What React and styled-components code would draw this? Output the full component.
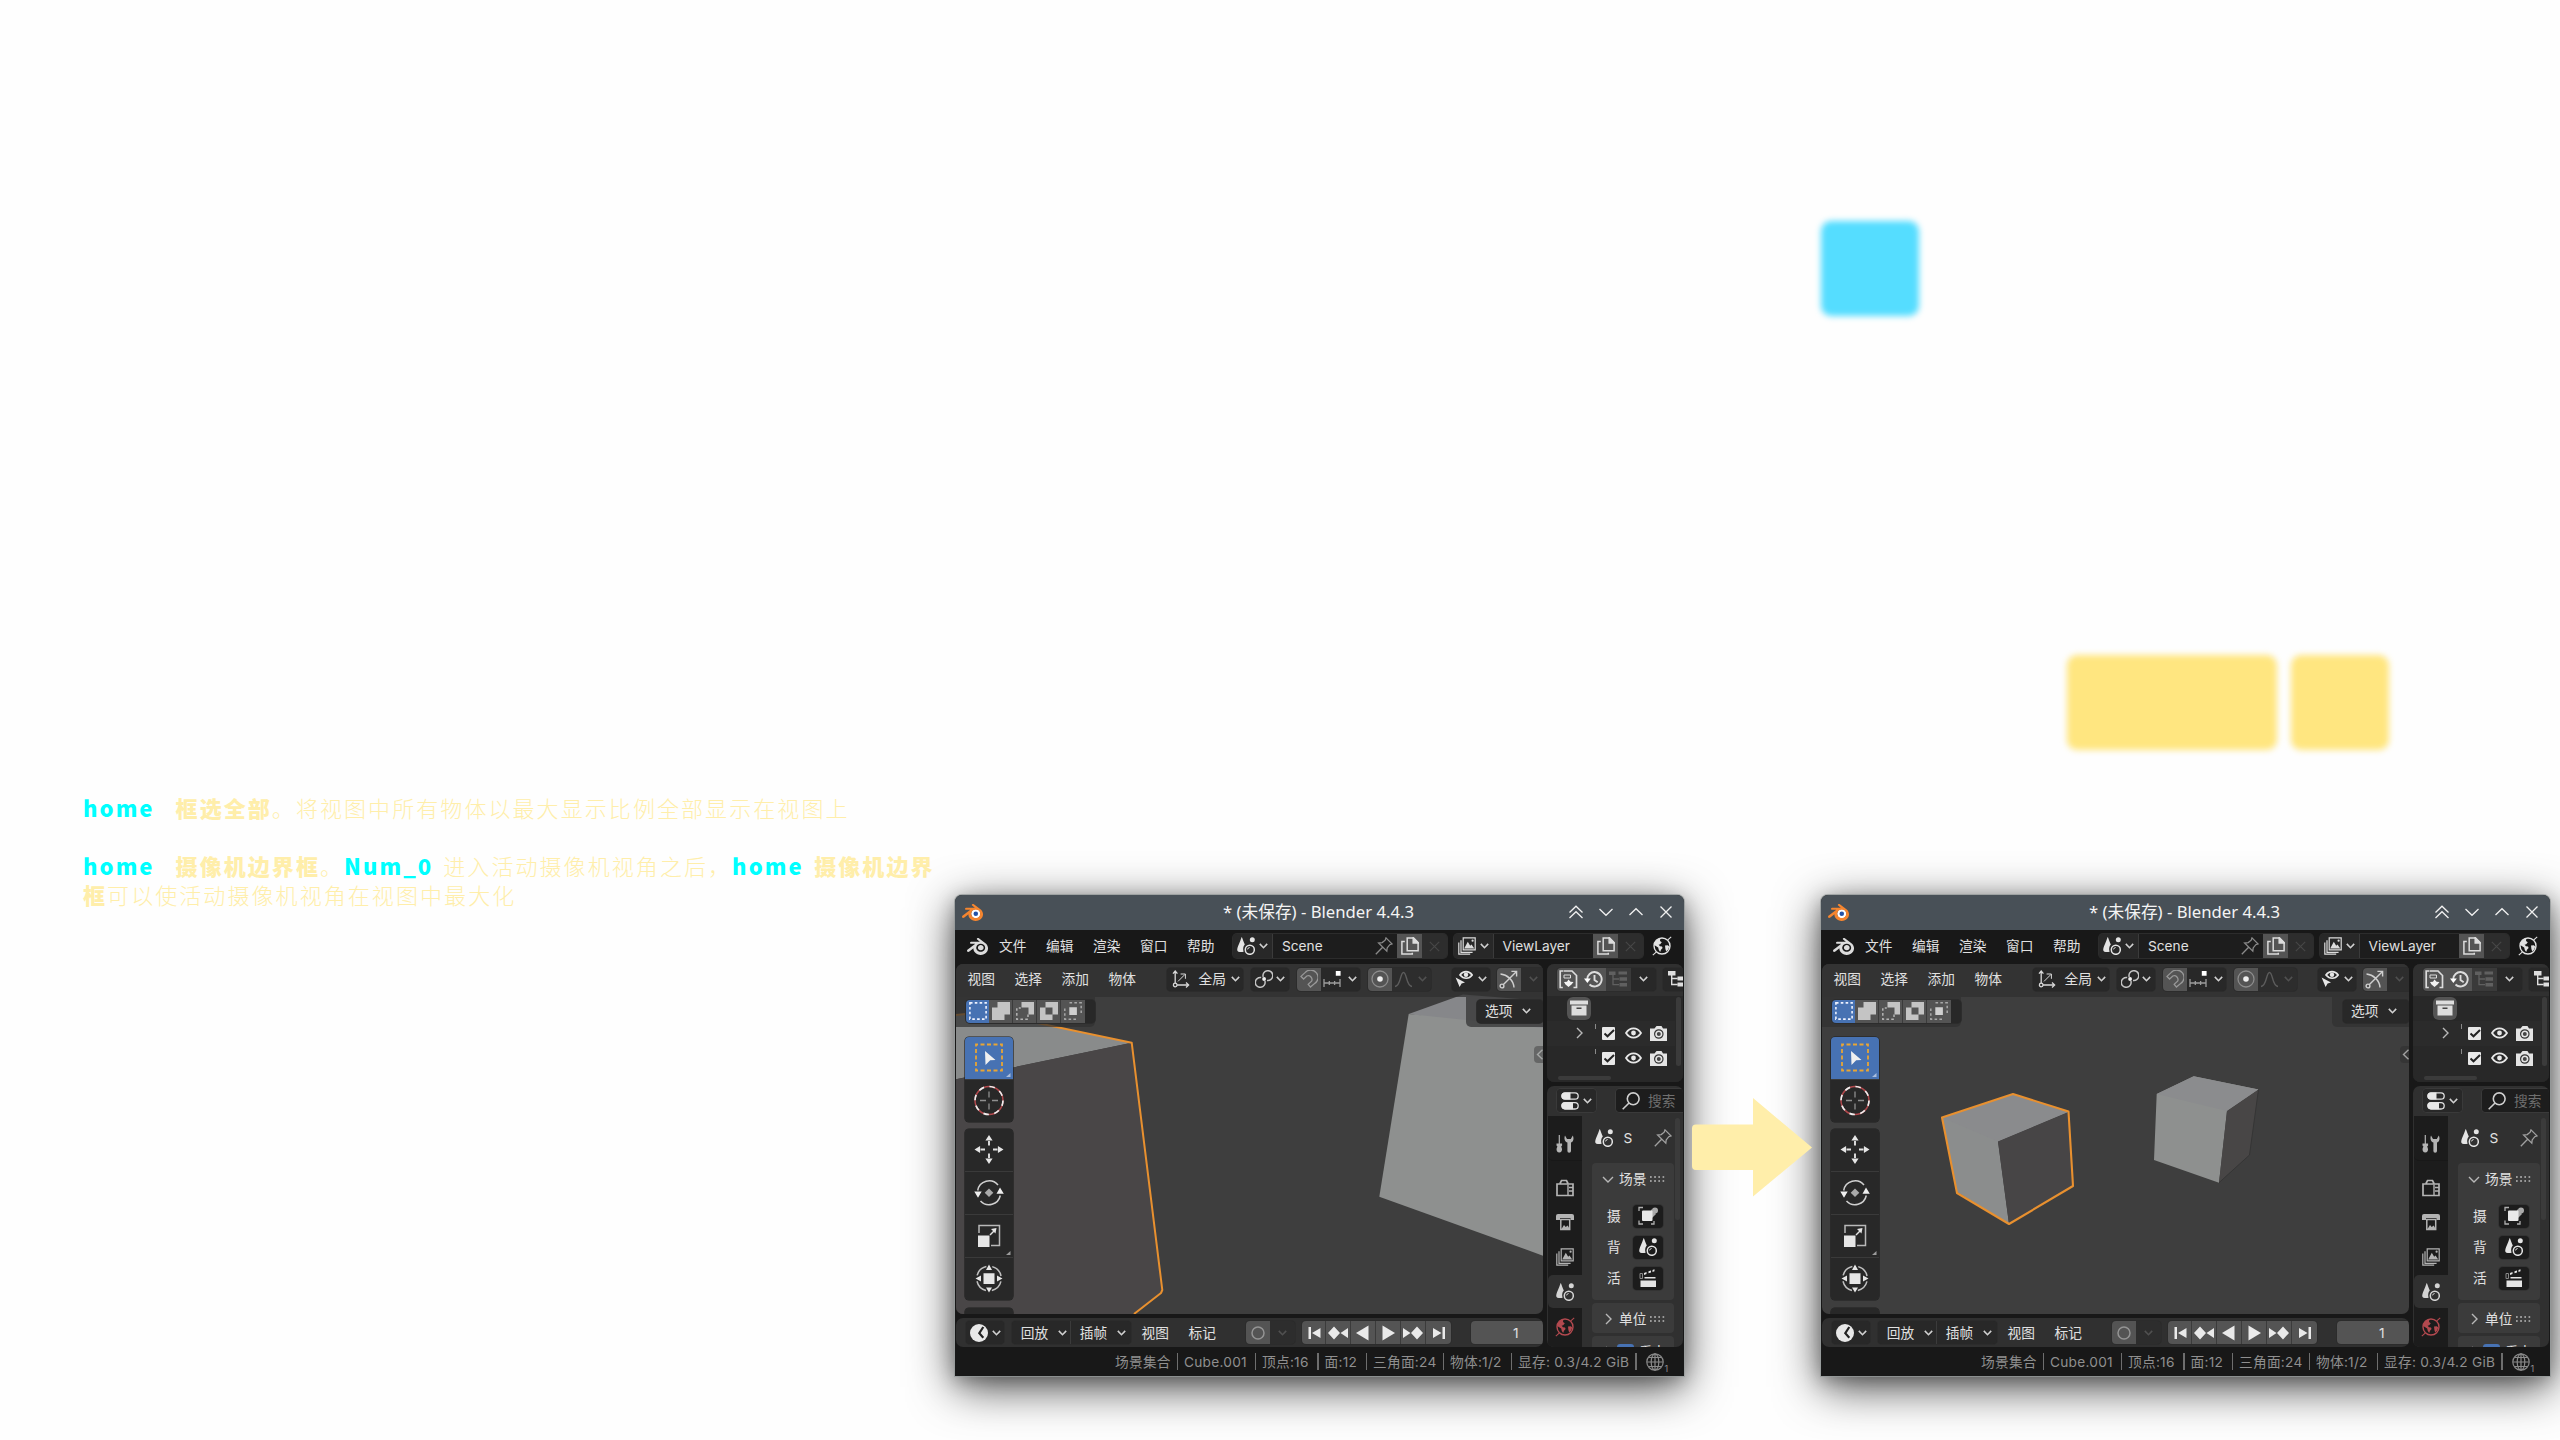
import React from "react";
import styled, { createGlobalStyle } from "styled-components";
import { SiBlender } from "react-icons/si";

const Global = createGlobalStyle`
  html, body { margin: 0; background: #fefefe; }
  * { box-sizing: border-box; }
  svg { display: block; flex: none; }
`;

const Page = styled.main`
  width: 2560px;
  height: 1440px;
  overflow: hidden;
  background: #fefefe;
  display: flex;
  flex-direction: column;
`;
const Keys = styled.section`
  height: 793px;
  padding: 220.5px 171px 0 0;
  display: flex;
  flex-direction: column;
  align-items: flex-end;
  gap: 339px;
  flex: none;
`;
const KeyRow = styled.div`
  display: flex;
  gap: 14px;
  margin-right: ${(p) => p.$mr || 0}px;
`;
const Key = styled.div`
  width: ${(p) => p.$w}px;
  height: 95px;
  border-radius: 10px;
  background: ${(p) => p.$c};
  filter: blur(3px);
`;
const Stage = styled.section`
  display: flex;
  align-items: flex-start;
  padding-left: 83px;
  flex: 1;
`;
const Notes = styled.div`
  width: 872px;
  flex: none;
  font: 300 22px/29px "Noto Sans CJK SC", sans-serif;
  letter-spacing: 2.07px;
  color: #ffeeaa;
  white-space: nowrap;
`;
const Line = styled.p`
  margin: 0 0 ${(p) => p.$gap || 0}px;
  display: flex;
  align-items: baseline;
`;
const Hot = styled.b`
  font-weight: 900;
  color: #00ffff;
  margin-right: ${(p) => p.$mr}px;
`;
const Term = styled.b`
  font-weight: 900;
`;
const ArrowSlot = styled.div`
  width: 137px;
  flex: none;
  padding: 305px 0 0 8px;
  position: relative;
  z-index: 2;
`;

/* window shell */
const Frame = styled.article`
  width: 729px;
  height: 481px;
  margin-top: 102px;
  flex: none;
  display: flex;
  flex-direction: column;
  background: #181818;
  border-radius: 7px 7px 0 0;
  overflow: hidden;
  color: #e0e0e0;
  font: 400 13.7px/20px Inter, "Noto Sans CJK SC", sans-serif;
  white-space: nowrap;
  box-shadow: 0 0 0 1px rgba(150, 155, 155, 0.75), 0 11px 46px rgba(0, 0, 0, 0.72),
    0 4px 18px rgba(0, 0, 0, 0.25);
`;
const TitleBar = styled.header`
  height: 35px;
  flex: none;
  background: #485057;
  display: flex;
  align-items: center;
  padding: 0 11.5px 1px 6.5px;
  color: #f4f4f4;
  font: 400 16.7px/22px "Noto Sans", "Noto Sans CJK SC", sans-serif;
`;
const LogoBox = styled.span`
  width: 110px;
`;
const Caption = styled.span`
  flex: 1;
  text-align: center;
  padding: 0 3px 1px 0;
`;
const Controls = styled.span`
  display: flex;
  gap: 16px;
`;
const Bar = styled.div`
  height: ${(p) => p.$h}px;
  flex: none;
  display: flex;
  align-items: center;
  padding-bottom: ${(p) => p.$pb || 0}px;
  background: ${(p) => p.$bg || "transparent"};
  overflow: hidden;
`;
const Item = styled.span`
  display: flex;
  flex: none;
  align-items: center;
  margin-left: ${(p) => p.$ml || 0}px;
  width: ${(p) => (p.$w ? p.$w + "px" : "auto")};
  color: ${(p) => p.$c || "inherit"};
`;
const Group = styled.div`
  display: flex;
  flex: none;
  height: ${(p) => p.$h || 23}px;
  margin-left: ${(p) => p.$ml || 0}px;
  border-radius: 4px;
  overflow: hidden;
  background: #282828;
  box-shadow: 0 0 0 1px ${(p) => p.$edge || "#2c2c2c"};
`;
const tones = {
  on: "#545454",
  blue: "#4772b3",
  dark: "#282828",
  dim: "#2d2d2d",
  off: "#3a3a3a",
  field: "#1d1d1d",
};
const Cell = styled.div`
  width: ${(p) => p.$w}px;
  display: flex;
  flex: none;
  align-items: center;
  justify-content: ${(p) => (p.$start ? "flex-start" : "center")};
  gap: ${(p) => p.$gap || 0}px;
  padding-left: ${(p) => p.$pl || 0}px;
  background: ${(p) => tones[p.$tone || "dark"]};
  border-right: ${(p) => (p.$line ? "1px solid #3b3b3b" : "0")};
  color: ${(p) => p.$c || "inherit"};
`;
const Body = styled.div`
  height: 383px;
  flex: none;
  display: flex;
  gap: 4px;
  padding: 0 1px;
`;
const Column = styled.div`
  width: ${(p) => p.$w}px;
  display: flex;
  flex-direction: column;
  gap: 4px;
  flex: none;
`;
const Editor = styled.section`
  height: ${(p) => p.$h}px;
  flex: none;
  border-radius: 7px;
  overflow: hidden;
  background: ${(p) => p.$bg || "#303030"};
  display: flex;
  flex-direction: column;
  position: relative;
`;
const SceneLayer = styled.div`
  position: absolute;
  inset: 0;
`;
const Overlay = styled.div`
  position: relative;
  display: flex;
  flex-direction: column;
  height: 100%;
`;
const ToolSettings = styled.div`
  height: 30px;
  flex: none;
  display: flex;
  justify-content: space-between;
`;
const Tab = styled.div`
  width: ${(p) => p.$w}px;
  padding: 3px 0 0 10px;
  background: rgba(48, 48, 48, 0.72);
  border-radius: ${(p) => (p.$right ? "0 0 0 5px" : "0 0 5px 0")};
`;
const Canvas = styled.div`
  flex: 1;
  display: flex;
  justify-content: space-between;
  align-items: flex-start;
  overflow: hidden;
`;
const Shelf = styled.div`
  display: flex;
  flex-direction: column;
  gap: 7.5px;
  padding: 10px 0 0 9.4px;
`;
const ToolGroup = styled.div`
  width: 48px;
  display: flex;
  flex-direction: column;
  gap: 1px;
  border-radius: 4px;
  overflow: hidden;
  background: #3a3a3a;
  box-shadow: 0 0 0 0.6px #1e1e1e;
`;
const Tool = styled.div`
  height: 42px;
  display: flex;
  align-items: center;
  justify-content: center;
  background: ${(p) => (p.$on ? "#4772b3" : "#282828")};
`;
const SideTab = styled.div`
  width: 9px;
  height: 17px;
  margin-top: 19px;
  border-radius: 4px 0 0 4px;
  display: flex;
  align-items: center;
  justify-content: flex-end;
  background: rgba(40, 40, 40, 0.4);
`;
const OutlinerBody = styled.div`
  display: flex;
  flex: 1;
  background: #282828;
`;
const Rows = styled.div`
  width: 128px;
  display: flex;
  flex-direction: column;
`;
const Row = styled.div`
  height: 25px;
  display: flex;
  align-items: center;
  background: ${(p) => (p.$alt ? "#2b2b2b" : "transparent")};
  padding-left: ${(p) => p.$pl || 0}px;
`;
const Badge = styled.div`
  width: 24px;
  height: 23px;
  border-radius: 6px;
  background: #545454;
  display: flex;
  align-items: center;
  justify-content: center;
`;
const Tick = styled.span`
  width: 1.3px;
  height: 5px;
  margin: 0 6px ${(p) => p.$mb || 14}px ${(p) => p.$ml}px;
  background: #8a8a8a;
`;
const Thumb = styled.div`
  width: ${(p) => p.$w}px;
  height: ${(p) => p.$h}px;
  margin: ${(p) => p.$m || "0"};
  border-radius: 3px;
  background: #3b3b3b;
  flex: none;
`;
const PropsBody = styled.div`
  flex: 1;
  display: flex;
  min-height: 0;
`;
const TabStrip = styled.nav`
  width: 34px;
  margin-left: 1px;
  background: #1c1c1c;
  display: flex;
  flex-direction: column;
  flex: none;
`;
const PropTab = styled.div`
  height: ${(p) => p.$h || 35}px;
  flex: none;
  padding-top: ${(p) => p.$pt || 0}px;
  display: flex;
  align-items: center;
  justify-content: center;
  border-radius: 5px 0 0 5px;
  background: ${(p) => (p.$on ? "#303030" : "transparent")};
  border-bottom: ${(p) => (p.$line ? "1px solid #181818" : "0")};
`;
const PropMain = styled.div`
  width: 92px;
  padding-left: 10px;
  display: flex;
  flex-direction: column;
  flex: none;
`;
const Context = styled.div`
  height: 47px;
  flex: none;
  display: flex;
  align-items: center;
  padding: 0 0 2px 2.5px;
`;
const Panel = styled.div`
  width: 82px;
  height: ${(p) => p.$h}px;
  flex: none;
  margin-bottom: 3px;
  border-radius: 4px;
  background: #3b3b3b;
`;
const PanelHead = styled.div`
  height: ${(p) => p.$h || 30}px;
  margin-bottom: ${(p) => p.$mb || 0}px;
  display: flex;
  align-items: center;
  padding-left: 10px;
`;
const Field = styled.div`
  height: 31px;
  display: flex;
  align-items: center;
  padding-left: 15px;
  gap: 12px;
`;
const DataBox = styled.div`
  width: 30px;
  height: 23px;
  border-radius: 4px;
  background: #1c1c1c;
  display: flex;
  align-items: center;
  justify-content: center;
  box-shadow: 0 0 0 1px #333;
`;
const Dots = styled.span`
  width: 15px;
  height: 6px;
  margin-left: 4px;
  background: radial-gradient(circle at 1px 1px, #9a9a9a 0.85px, transparent 1.1px) 0 0 / 4.2px 4px;
`;
const Check = styled.span`
  width: 17px;
  height: 17px;
  border-radius: 3px;
  background: #4772b3;
  margin: 0 5px 0 5px;
`;
const Status = styled.footer`
  flex: 1;
  display: flex;
  align-items: center;
  color: #8f8f8f;
  padding-left: 160px;
  letter-spacing: 0.25px;
`;
const Stat = styled.span`
  width: ${(p) => p.$w}px;
  display: flex;
  align-items: center;
  flex: none;
`;
const Rule = styled.i`
  width: 1.5px;
  height: 17px;
  margin-right: 6px;
  background: #6e6e6e;
  flex: none;
`;
const Sub = styled.small`
  font-size: 9px;
  line-height: 9px;
  margin: 14px 0 0 1px;
`;

/* icons */
const S = ({ s = 20, w, h, v, c = "#e2e2e2", sw = 1.5, children }) => (
  <svg
    width={w || s}
    height={h || s}
    viewBox={v || `0 0 ${w || s} ${h || s}`}
    fill="none"
    stroke={c}
    strokeWidth={sw}
  >
    {children}
  </svg>
);
const Chev = ({ c = "#d0d0d0" }) => (
  <S w={9} h={6} c={c} sw={1.6}><path d="M.8.9 4.5 4.7 8.2.9" /></S>
);
const Right = () => <S w={7} h={12} c="#b8b8b8" sw={1.4}><path d="M1 1 6 6 1 11" /></S>;
const Down = () => <S w={12} h={7} c="#b8b8b8" sw={1.4}><path d="M1 1 6 6 11 1" /></S>;
const SceneIcon = ({ c = "#e4e4e4" }) => (
  <S s={18} c={c}>
    <path d="M4.6 0C5 0 6.2 3.5 7.8 7.6 6 9.2 5.8 12.6 6.6 14.8 3.6 15.6.3 14.9.2 12.9.2 10 3.2 5 4.6 0Z" fill={c} stroke="none" />
    <circle cx="15.3" cy="2.7" r="2.5" fill={c} stroke="none" />
    <circle cx="12.8" cy="12.8" r="4.5" />
    <path d="M10.6 12.4a2.2 2.2 0 0 1 2-1.9" strokeWidth="1" />
  </S>
);
const LayerIcon = ({ c = "#dcdcdc" }) => (
  <S s={18} c={c} sw={1.2}>
    <path d="M5.2.8h12v12h-12zM3 3.3v12h11.6M.8 5.6v11.6h11.4" />
    <path d="M6.2 11.6 9.8 4.8l2.4 4 1.3-1.2 2.8 4Z" fill={c} stroke="none" />
    <circle cx="14.6" cy="3.7" r="1.1" fill={c} stroke="none" />
  </S>
);
const Pin = ({ c = "#8a8a8a" }) => (
  <S s={18} c={c} sw={1.3}>
    <path d="m11 .9 6 6-2.2.8-2.6 3.2-.4 3.2L3.6 6l3.6-.4 3-2.4ZM7.6 10.2.8 17.2" />
  </S>
);
const Copy = () => (
  <S s={18} c="#dcdcdc" sw={1.5}>
    <path d="M6.2.9h6.4l4.5 4.6v8.2H6.2z" />
    <path d="M12.2.9v5h5z" fill="#dcdcdc" />
    <path d="M3.8 4.6H.9v12.4h10.4v-1.2" />
  </S>
);
const Cross = () => <S s={11} c="#474747" sw={1.2}><path d="m.8.8 9.4 9.4m0-9.4L.8 10.2" /></S>;
const World = ({ c = "#e2e2e2" }) => (
  <S s={20} c={c} sw={1.4}>
    <circle cx="10" cy="10" r="8" />
    <path d="M2.6 6.4 5 3.6 8.4 2.6 8 5l1.8 1.2-1.6 2L6.600 8.800l1.400 1.400 2 .2.6 1.600-1.600 1.800-.8 2.200L6.800 14l-.6-2.400L2.600 9.200ZM13 9.600l2.800-.4 1.400 1.400-1 2.800-2 2-.8-2.400Z" fill={c} stroke="none" />
    <path d="M15.8 3.8 19.2.8M4.2 16.2.8 19.2" strokeWidth="1.1" />
  </S>
);
const Axes = () => (
  <S s={18} c="#d8d8d8" sw={1.3}>
    <path d="M3.2 2v11.5M5 15h10.5M1 3.6 3.2 1l2.2 2.6M14 12.6l2.6 2.4L14 17.4" />
    <circle cx="3.2" cy="15" r="1.8" />
    <path d="m6 11.4 7-7M8.6 4h4.8v4.8" strokeWidth="1" />
  </S>
);
const Pivot = () => (
  <S s={18} c="#c4c4c4" sw={1.5}>
    <path d="M8.2 7A4.900 4.900 0 1 1 12 10.400M9.900 11A4.900 4.900 0 1 1 6.200 7.600" />
    <circle cx="9.1" cy="9" r="1.9" fill="#eee" stroke="none" />
  </S>
);
const Magnet = () => (
  <S s={18} c="#989898" sw={1.3}>
    <path d="M1 6.4 5 2.6A7.4 7.4 0 1 1 14 14l-3.6 3-2.2-2.6 3.4-3.2A3.8 3.8 0 0 0 6.8 6L3.6 9Z" />
  </S>
);
const SnapInc = () => (
  <S w={18} h={17} c="#9c9c9c" sw={1.3}>
    <path d="M1 8v8M6.3 10v4M11.6 10v4M17 8v8M1 12h16" />
    <path d="M12.8 0h4.8v4.8h-4.8z" fill="#fff" stroke="none" />
  </S>
);
const Prop = () => (
  <S s={18} c="#8c8c8c" sw={1.3}><circle cx="9" cy="9" r="8" /><circle cx="9" cy="9" r="2.8" fill="#eee" stroke="none" /></S>
);
const Falloff = () => <S s={17} c="#5c5c5c" sw={1.4}><path d="M0 15.5C6 15 5 1.5 8.5 1.5S11 15 17 15.5" /></S>;
const Visible = () => (
  <S s={18} c="#e6e6e6" sw={1.7}>
    <path d="M5 5C8 .5 14 .5 17.2 5 14 9.3 8.6 9.3 5 5Z" />
    <circle cx="11" cy="4.8" r="2.2" fill="#e6e6e6" stroke="none" />
    <path d="M.6 7.4 10 12.4 6.6 13.4 4.6 17Z" fill="#e6e6e6" stroke="none" />
  </S>
);
const Gizmo = () => (
  <S s={19} c="#cfcfcf" sw={1.4}>
    <path d="M4.2 14.8 17 2M12.4 1.4H17.6V6.6M1.5 4C8 4.5 14.5 10 15 17.5" />
    <circle cx="3" cy="16" r="1.9" />
  </S>
);
const SelNew = () => <S s={18} c="#eef2ff" sw={1.6}><path d="M.9.9h16.2v16.2H.9z" strokeDasharray="2.6 2.25" /></S>;
const SelAdd = () => <S s={18}><path d="M5.5 0H18v12.5h-5.5V18H0V5.5h5.5Z" fill="#c4c4c4" stroke="none" /></S>;
const SelSub = () => (
  <S s={18} c="#b4b4b4"><path d="M5.5 0H18v12.5h-5.5v-7h-7Z" fill="#c4c4c4" stroke="none" /><path d="M12 12.5v4.7H.8V6h4" strokeDasharray="2.6 2.25" /></S>
);
const SelXor = () => (
  <S s={18}><path fillRule="evenodd" d="M5.5 0H18v12.5h-5.5V18H0V5.5h5.5ZM5.5 5.5v7h7v-7Z" fill="#c4c4c4" stroke="none" /></S>
);
const SelAnd = () => (
  <S s={18} c="#a8a8a8"><path d="M5.5.8h11.7v11.7M12 17.2H.8V5.5" strokeDasharray="2.6 2.25" /><path d="M5.3 5.3h7.6v7.6H5.3z" fill="#cfcfcf" stroke="none" /></S>
);
const Corner = ({ c = "#9b9b9b" }) => <path d="M45.5 36v4h-4.5z" fill={c} stroke="none" />;
const T = ({ children }) => <S w={48} h={42} c="#e2e2e2">{children}</S>;
const BoxSelect = () => (
  <T>
    <path d="M11 7.5h26v26H11z" stroke="#e8a534" strokeWidth="1.8" strokeDasharray="4 2.5" strokeDashoffset="2" />
    <path d="M20 14 30.5 23l-5.3.3L20.5 28Z" fill="#f0f0f0" stroke="none" /><Corner c="#a9bddd" />
  </T>
);
const Cursor = () => (
  <T>
    <circle cx="24" cy="20.5" r="14" stroke="#b0484c" />
    <circle cx="24" cy="20.5" r="14" stroke="#eee" strokeWidth="1.7" strokeDasharray="5.5 5.5" />
    <path d="M24 11.5v6M24 23.5v6M15 20.5h6M27 20.5h6" stroke="#8f8f8f" strokeWidth="1.3" />
  </T>
);
const Move = () => (
  <T>
    <path d="M24 12v4.5M24 24.5V29M15.5 20.5H20M28 20.5h4.5" strokeWidth="1.9" />
    <path d="m24 6 3.6 5.6h-7.2ZM24 35l3.6-5.6h-7.2ZM9.500 20.500l5.600-3.600v7.200ZM38.500 20.500l-5.600-3.600v7.200Z" fill="#e6e6e6" stroke="none" />
  </T>
);
const Rotate = () => (
  <T>
    <path d="M12.7 18.5A11.6 11.6 0 0 1 33 13M35.3 23.5A11.6 11.6 0 0 1 15.5 29" stroke="#cfcfcf" />
    <path d="m24 16.5 4.3 4.2L24 25l-4.3-4.3Z" fill="#aaa" stroke="none" />
    <path d="M9.3 19.5h7.4L13 25.7ZM31.5 21.800h7.300L35 15.600Z" fill="#eee" stroke="none" />
  </T>
);
const Scale = () => (
  <T>
    <path d="M14 18v-7.5h20.5v20H26" stroke="#b8b8b8" />
    <path d="M13 20.5h11.5V32H13z" fill="#e6e6e6" stroke="none" />
    <path d="m25 20 4-4" /><path d="m31.5 13-1 5.5-4.5-4.5Z" fill="#e6e6e6" stroke="none" /><Corner />
  </T>
);
const Transform = () => (
  <T>
    <circle cx="24" cy="20.5" r="12.3" stroke="#c0c0c0" strokeDasharray="13.3 6" strokeDashoffset="-3" />
    <path d="M18.5 15.3h11v10.8h-11z" fill="#e6e6e6" stroke="none" />
    <path d="m24 6.5 3 5.5h-6ZM24 34.500l3-5h-6ZM10.500 20.500l5.500-3v6ZM37.500 20.500l-5.500-3v6Z" fill="#e6e6e6" stroke="none" />
  </T>
);
const Box = () => (
  <S s={18}><path d="M0 1.5h18v4H0zM1.5 6.500h15v10h-15z" fill="#dedede" stroke="none" /><path d="M6.5 9.300h5" stroke="#444" /></S>
);
const CheckOn = () => (
  <S s={13}><rect width="13" height="13" rx="1" fill="#e8e8e8" stroke="none" /><path d="M2.5 6.5 5.5 9.3 12 3" stroke="#222" strokeWidth="2" /></S>
);
const Eye = () => (
  <S w={17} h={12} c="#e8e8e8" sw={1.8}><path d="M1 6C5-.2 12-.2 16 6 12 12.2 5 12.2 1 6Z" /><circle cx="8.5" cy="6" r="2.4" fill="#e8e8e8" stroke="none" /></S>
);
const Cam = () => (
  <S w={17} h={15}><path d="M0 2.5h4.500L6.500 0h5l1.500 2.500h4V15H0Z" fill="#e4e4e4" stroke="none" /><circle cx="8.8" cy="8" r="4.2" stroke="#333" strokeWidth="1.2" /><circle cx="8.8" cy="8" r="2" fill="#444" stroke="none" /></S>
);
const FileIcon = () => (
  <S s={19} c="#dcdcdc" sw={1.7}><path d="M4.5 1H1.200v16.500h2.600M5 1h8l4.500 4.500v12h-3" /><path d="M5 5h6.500v3H5z" strokeWidth="1" /><path d="m9.500 9.500 2 2.200 3 .3-2 2.500-3 2.500-3-2.500-1.500-2.500 3-.3Z" fill="#f2f2f2" stroke="none" /></S>
);
const History = () => (
  <S s={19} c="#dcdcdc" sw={1.9}><path d="M3.3 10A7.2 7.2 0 1 1 5.5 14.5" /><path d="M10.5 5v5l3.2 2.2" /><path d="M0 8.5h6.8L3.4 13Z" fill="#fff" stroke="none" /></S>
);
const Tree = ({ c = "#606060" }) => (
  <S s={18} c={c} sw={1.3}><path d="M0 1.5h6.500v3.500H0zM9.500 1.500H18v3H9.500zM10.500 7.300H18v3.400h-7.500zM10.500 13H18v3.400h-7.500z" fill={c} stroke="none" /><path d="M4 5v9.700h6M4 9h6" /></S>
);
const Filter = () => (
  <S s={18} c="#dedede" sw={1.4}><path d="M0 1h7.500v4.500H0zM9.500 6.500h6v4h-6zM9.500 12.500h6v4h-6z" fill="#dedede" stroke="none" /><path d="M3.700 5v9.500h6M3.700 8.500h6" /></S>
);
const Toggles = () => (
  <S s={18} c="#dedede" sw={1.3}>
    <rect x=".8" y=".8" width="16.4" height="6.4" rx="3.2" /><rect x=".8" y="10.6" width="16.4" height="6.4" rx="3.2" />
    <path d="M4 .5h5.500v7H4A3.500 3.500 0 0 1 4 .5ZM4 10.300h8v7H4a3.500 3.500 0 0 1 0-7Z" fill="#e8e8e8" stroke="none" />
  </S>
);
const Search = () => <S s={18} c="#cfcfcf" sw={1.6}><circle cx="11.2" cy="6.8" r="5.9" /><path d="M7 11 .7 17.3" /></S>;
const ToolsTab = () => (
  <S s={18} c="#b4b4b4" sw={2}><path d="M3.3 0v9" strokeWidth="1.2" /><path d="M.5 8.500h5.600v2l-1 1.200c1.300 1.500 1.600 5.800-1.800 5.800S.1 13.200 1.500 11.700L.5 10.500ZM9 .5l2 3.500h3.800L16.800.5C18 3 17.800 6.300 15 7.600V16a1.800 1.800 0 0 1-3.600 0V7.600C8.200 6.300 8 3 9 .5Z" fill="#b4b4b4" stroke="none" /></S>
);
const RenderTab = () => (
  <S s={18} c="#b4b4b4" sw={1.7}><path d="M1 5h16v11.500H1zM4 4.500 5.500 1.500h5L12 4.500" /><path d="M12 5.500v11M13 8.500h4M13 12h4" strokeWidth="1.4" /></S>
);
const OutputTab = () => (
  <S s={18} c="#b4b4b4" sw={1.5}><path d="M0 3a2 2 0 0 1 2-2h14a2 2 0 0 1 2 2v4H0Z" fill="#b4b4b4" stroke="none" /><path d="M4 5h10.500v12H4z" fill="#1c1c1c" stroke="none" /><path d="M4.800 6.500h8.900v10H4.800z" /><path d="m5.500 16 2.500-4 1.700 2 2-1.500 2 3.500Z" fill="#b4b4b4" stroke="none" /></S>
);
const CameraObj = () => (
  <S s={20} c="#b0b0b0" sw={1.3}><path d="M1 5V1.500h4M1 14.500V18h4M13 18h3v-3" /><circle cx="17" cy="4.5" r="3" fill="#aaa" stroke="none" /><path d="m14 3 4 5-4 4-2-6Z" fill="#aaa" stroke="none" /><rect x="4" y="4.5" width="10.5" height="10.5" rx="1" fill="#e8e8e8" stroke="none" /></S>
);
const Clip = () => (
  <S s={18}><path d="M1.500 11.500h15.500V18H1.500zM5.500 8h11v1.500h-11zM5 4l2.500-1V5L5 6ZM9.500 2.200 12 1.500v2l-2.500.8ZM13.500.9l2-.7v2l-2 .7Z" fill="#e4e4e4" stroke="none" /><path d="M1 4.500h2.500v5H1z" stroke="#888" strokeWidth="1" /></S>
);
const Clock = () => (
  <S s={18}><circle cx="9" cy="9" r="9" fill="#e8e8e8" stroke="none" /><path d="M13.3 3 9.3 9.2l4 4.5" stroke="#222" strokeWidth="2.2" /></S>
);
const P = ({ w = 20, d }) => <S w={w} h={16}><path d={d} fill="#eaeaea" stroke="none" /></S>;
const Globe = () => (
  <S s={18} c="#8a8a8a" sw={1.2}><circle cx="9" cy="9" r="8.2" /><ellipse cx="9" cy="9" rx="3.8" ry="8.2" /><path d="M9 .8v16.4M1 9h16M2.500 4.500h13M2.500 13.500h13" /></S>
);

const SceneClose = () => (
  <svg width="587" height="350" viewBox="1 69 587 350">
    <path d="M1 120 30 117 176.700 147.700 1 184.300Z" fill="#898b8b" />
    <path d="M1 184.300 176.700 147.700 207.300 396 180 419H1Z" fill="#494647" />
    <path d="M1 120 30 117 176.700 147.700 207.300 395 206 398 179 419" fill="none" stroke="#e8902f" strokeWidth="2" strokeLinejoin="round" />
    <path d="M453.700 119 508 99.500 588 106v34Z" fill="#86878a" />
    <path d="M453.700 119 588 133V360.700L424.300 301.700Z" fill="#8e908f" />
  </svg>
);
const SceneFit = () => (
  <svg width="587" height="350" viewBox="1 69 587 350">
    <path d="M121 222.500 192 199 247.500 217 177 246.500 188 329 136 297Z" fill="#8b8d8d" />
    <path d="M121 222.500 192 199 247.500 217 177 246.500Z" fill="#8a8b8d" />
    <path d="M247.500 217 177 246.500 188 329 252 291Z" fill="#474546" />
    <path d="M121 222.500 192 199 247.500 216.500 252 291 188 329 136 298Z" fill="none" stroke="#e8902f" strokeWidth="2.1" strokeLinejoin="round" />
    <path d="M335.700 199 372.700 181.300 437.500 194.500 406 216 398 287.700 333 265Z" fill="#8e908f" />
    <path d="M335.700 199 372.700 181.300 437.500 194.500 406 216Z" fill="#8b8c8e" />
    <path d="M406 216 437.500 194.500 428.500 260 398 287.700Z" fill="#484646" />
    <path d="M437.500 194.500 428.500 260 398 287.700" fill="none" stroke="#353535" />
  </svg>
);

const BlenderWindow = ({ scene, tabTone }) => (
  <Frame>
    <TitleBar>
      <LogoBox>
        <svg width="21" height="21" viewBox="0 0 24 24">
          <circle cx="15.75" cy="13.5" r="5" fill="#fff" />
          <SiBlender size={24} color="#f5852f" />
          <circle cx="15.75" cy="13.5" r="4.7" fill="#fff" />
          <circle cx="15.75" cy="13.5" r="2.6" fill="#2352a8" />
        </svg>
      </LogoBox>
      <Caption>* (未保存) - Blender 4.4.3</Caption>
      <Controls>
        <S s={14} c="#f0f0f0" sw={1.3}><path d="M.5 7.5 7 1.2l6.5 6.3M.5 13 7 6.700l6.500 6.300" /></S>
        <S s={14} c="#f0f0f0" sw={1.3}><path d="M.5 4 7 10.3 13.5 4" /></S>
        <S s={14} c="#f0f0f0" sw={1.3}><path d="M.5 10 7 3.7l6.5 6.3" /></S>
        <S s={14} c="#f0f0f0" sw={1.3}><path d="m1.5 1.5 11 11m0-11-11 11" /></S>
      </Controls>
    </TitleBar>
    <Bar $h={34} $pb={2}>
      <Item $ml={11.5} $w={32.5}><SiBlender size={21} color="#dcdcdc" /></Item>
      <Item $w={47}>文件</Item><Item $w={47}>编辑</Item><Item $w={47}>渲染</Item><Item $w={47}>窗口</Item><Item $w={46}>帮助</Item>
      <Group $h={24}>
        <Cell $w={40} $gap={4} $line><SceneIcon /><Chev /></Cell>
        <Cell $w={102} $tone="field" $start $pl={9}>Scene</Cell>
        <Cell $w={22} $tone="field" $start><Pin /></Cell>
        <Cell $w={25} $tone="on"><Copy /></Cell>
        <Cell $w={25} $tone="dim"><Cross /></Cell>
      </Group>
      <Group $h={24} $ml={7}>
        <Cell $w={39.5} $gap={4} $line><LayerIcon /><Chev /></Cell>
        <Cell $w={99.5} $tone="field" $start $pl={9}>ViewLayer</Cell>
        <Cell $w={25} $tone="on"><Copy /></Cell>
        <Cell $w={25} $tone="dim"><Cross /></Cell>
      </Group>
      <Item $ml={8.5}><World /></Item>
    </Bar>
    <Body>
      <Column $w={587}>
        <Editor $h={349.5} $bg="#3e3e3e">
          <SceneLayer>{scene}</SceneLayer>
          <Overlay>
            <Bar $h={32.5} $pb={2} $bg="rgba(48,48,48,.75)">
              <Item $ml={11.5} $w={47}>视图</Item><Item $w={47}>选择</Item><Item $w={47}>添加</Item><Item $w={58.5}>物体</Item>
              <Group>
                <Cell $w={75.5} $start $pl={4.5} $gap={9}><Axes />全局<Item $ml={-4}><Chev /></Item></Cell>
              </Group>
              <Group $ml={8.5}><Cell $w={38} $gap={3}><Pivot /><Chev /></Cell></Group>
              <Group $ml={7.5}>
                <Cell $w={24} $tone="on"><Magnet /></Cell>
                <Cell $w={39.5} $gap={7}><SnapInc /><Chev /></Cell>
              </Group>
              <Group $ml={7.5}>
                <Cell $w={24} $tone="on"><Prop /></Cell>
                <Cell $w={39} $gap={6} $tone="dim"><Falloff /><Chev c="#505050" /></Cell>
              </Group>
              <Group $ml={21}><Cell $w={38} $gap={5}><Visible /><Chev /></Cell></Group>
              <Group $ml={7.5}>
                <Cell $w={23.5} $tone="on"><Gizmo /></Cell>
                <Cell $w={30} $tone="dim" $start $pl={8}><Chev c="#505050" /></Cell>
              </Group>
            </Bar>
            <ToolSettings>
              <Tab $w={139}>
                <Group>
                  <Cell $w={23} $tone="blue"><SelNew /></Cell>
                  <Cell $w={24} $tone="on" $line><SelAdd /></Cell>
                  <Cell $w={24} $tone="on" $line><SelSub /></Cell>
                  <Cell $w={24} $tone="on" $line><SelXor /></Cell>
                  <Cell $w={24} $tone="on"><SelAnd /></Cell>
                </Group>
              </Tab>
              <Tab $w={77.5} $right>
                <Group $ml={1}><Cell $w={58.5} $start $pl={8.5} $gap={10}>选项<Chev /></Cell></Group>
              </Tab>
            </ToolSettings>
            <Canvas>
              <Shelf>
                <ToolGroup>
                  <Tool $on><BoxSelect /></Tool>
                  <Tool><Cursor /></Tool>
                </ToolGroup>
                <ToolGroup>
                  <Tool><Move /></Tool><Tool><Rotate /></Tool><Tool><Scale /></Tool><Tool><Transform /></Tool>
                </ToolGroup>
                <ToolGroup><Tool /></ToolGroup>
              </Shelf>
              <SideTab><S w={7} h={11} c={tabTone} sw={1.4}><path d="M6.5.8 1.5 5.5l5 4.7" /></S></SideTab>
            </Canvas>
          </Overlay>
        </Editor>
        <Editor $h={29.5}>
          <Bar $h={30}>
            <Group $ml={10}><Cell $w={38} $gap={4}><Clock /><Chev /></Cell></Group>
            <Group $ml={8}>
              <Cell $w={58.5} $start $pl={8.8} $gap={9.5} $line>回放<Chev /></Cell>
              <Cell $w={60} $start $pl={9.2} $gap={10.4}>插帧<Chev /></Cell>
            </Group>
            <Item $ml={11} $w={47}>视图</Item><Item $w={57.5}>标记</Item>
            <Group>
              <Cell $w={23.5} $tone="on"><S s={14} c="#949494" sw={1.5}><circle cx="7" cy="7" r="6" /></S></Cell>
              <Cell $w={25} $tone="dim"><Chev c="#505050" /></Cell>
            </Group>
            <Group $ml={7.5}>
              <Cell $w={24} $tone="on" $line><P w={16} d="M2.5 2h2.5v12H2.5zM14.5 3v10L6 8Z" /></Cell>
              <Cell $w={25} $tone="on" $line><P d="m0 8 6-6.5L12 8 6 14.5ZM20 3v10l-7.5-5Z" /></Cell>
              <Cell $w={25} $tone="on" $line><P w={16} d="M13.5.5v15L1 8Z" /></Cell>
              <Cell $w={25} $tone="on" $line><P w={16} d="M2.5.5v15L15 8Z" /></Cell>
              <Cell $w={25} $tone="on" $line><P d="m20 8-6-6.5L8 8l6 6.5ZM0 3v10l7.5-5Z" /></Cell>
              <Cell $w={25} $tone="on"><P w={16} d="M11.5 2H14v12h-2.5zM2 3v10l8.5-5Z" /></Cell>
            </Group>
            <Group $ml={20}><Cell $w={80} $tone="on" $start $pl={42}>1</Cell></Group>
          </Bar>
        </Editor>
      </Column>
      <Column $w={136}>
        <Editor $h={117.5} $bg="#282828">
          <Bar $h={31.5} $pb={1} $bg="#303030">
            <Group $ml={9.5}>
              <Cell $w={24.5} $tone="on"><FileIcon /></Cell>
              <Cell $w={24.5} $tone="on"><History /></Cell>
              <Cell $w={25} $tone="off"><Tree /></Cell>
              <Cell $w={25}><Chev /></Cell>
            </Group>
            <Group $ml={7.5}><Cell $w={40} $start $pl={4.5}><Filter /></Cell></Group>
          </Bar>
          <OutlinerBody>
            <Rows>
              <Row $pl={20}><Badge><Box /></Badge></Row>
              <Row $alt $pl={29}><Right /><Tick $ml={11.5} /><CheckOn /><Item $ml={10}><Eye /></Item><Item $ml={8}><Cam /></Item></Row>
              <Row $pl={29}><Tick $ml={18.5} /><CheckOn /><Item $ml={10}><Eye /></Item><Item $ml={8}><Cam /></Item></Row>
              <Thumb $w={53} $h={4} $m="5px 0 0 11px" />
            </Rows>
            <Thumb $w={5} $h={69} $m="1px 0 0 1px" />
          </OutlinerBody>
        </Editor>
        <Editor $h={261.5}>
          <Bar $h={30}>
            <Group $ml={10} $edge="#3a3a3a"><Cell $w={39} $gap={4}><Toggles /><Chev /></Cell></Group>
            <Group $ml={20} $edge="#3a3a3a"><Cell $w={80} $tone="field" $start $pl={6} $gap={8} $c="#6f6f6f"><Search />搜索</Cell></Group>
          </Bar>
          <PropsBody>
            <TabStrip>
              <PropTab $h={45} $pt={12} $line><ToolsTab /></PropTab>
              <PropTab $h={44} $pt={10}><RenderTab /></PropTab>
              <PropTab $h={35}><OutputTab /></PropTab>
              <PropTab $h={35.5}><LayerIcon c="#b4b4b4" /></PropTab>
              <PropTab $h={33} $on><SceneIcon c="#d4d4d4" /></PropTab>
              <PropTab $h={38}><World c="#b3494f" /></PropTab>
            </TabStrip>
            <PropMain>
              <Context><SceneIcon /><Item $ml={11} $w={30}>S</Item><Pin c="#a0a0a0" /></Context>
              <Panel $h={137.5}>
                <PanelHead $h={33} $mb={5}><Down /><Item $ml={5}>场景</Item><Dots /></PanelHead>
                <Field>摄<DataBox><CameraObj /></DataBox></Field>
                <Field>背<DataBox><SceneIcon /></DataBox></Field>
                <Field>活<DataBox><Clip /></DataBox></Field>
              </Panel>
              <Panel $h={30}><PanelHead $h={31}><Item $ml={3}><Right /></Item><Item $ml={7}>单位</Item><Dots /></PanelHead></Panel>
              <Panel $h={40}><PanelHead $h={32}><Item $ml={3}><Right /></Item><Check />重力</PanelHead></Panel>
            </PropMain>
            <Thumb $w={4.5} $h={102} $m="2px 0 0 1px" />
          </PropsBody>
        </Editor>
      </Column>
    </Body>
    <Status>
      <Stat $w={61.5}>场景集合</Stat><Rule />
      <Stat $w={70.5}>Cube.001</Stat><Rule />
      <Stat $w={55}>顶点:16</Stat><Rule />
      <Stat $w={41}>面:12</Stat><Rule />
      <Stat $w={69.5}>三角面:24</Stat><Rule />
      <Stat $w={60.5}>物体:1/2</Stat><Rule />
      <Stat $w={117}>显存: 0.3/4.2 GiB</Stat><Rule />
      <Item $ml={3}><Globe /></Item><Sub>1</Sub>
    </Status>
  </Frame>
);

export default function App() {
  return (
    <Page>
      <Global />
      <Keys>
        <KeyRow $mr={470}><Key $w={98} $c="#55ddff" /></KeyRow>
        <KeyRow><Key $w={210} $c="#ffe680" /><Key $w={98} $c="#ffe680" /></KeyRow>
      </Keys>
      <Stage>
        <Notes>
          <Line $gap={29}><Hot $mr={21}>home</Hot><Term>框选全部</Term>。将视图中所有物体以最大显示比例全部显示在视图上</Line>
          <Line><Hot $mr={21}>home</Hot><Term>摄像机边界框</Term>。<Hot $mr={10}>Num_0</Hot>进入活动摄像机视角之后，<Hot $mr={10.5}>home</Hot><Term>摄像机边界</Term></Line>
          <Line><Term>框</Term>可以使活动摄像机视角在视图中最大化</Line>
        </Notes>
        <BlenderWindow scene={<SceneClose />} tabTone="#a5a7a6" />
        <ArrowSlot>
          <svg width="120" height="99" viewBox="0 0 120 99">
            <path d="M4 26.5H61V0L120 49.5 61 98.5V72H4Q0 72 0 68V30.5Q0 26.5 4 26.5Z" fill="#ffeeaa" />
          </svg>
        </ArrowSlot>
        <BlenderWindow scene={<SceneFit />} tabTone="#a0a0a0" />
      </Stage>
    </Page>
  );
}
